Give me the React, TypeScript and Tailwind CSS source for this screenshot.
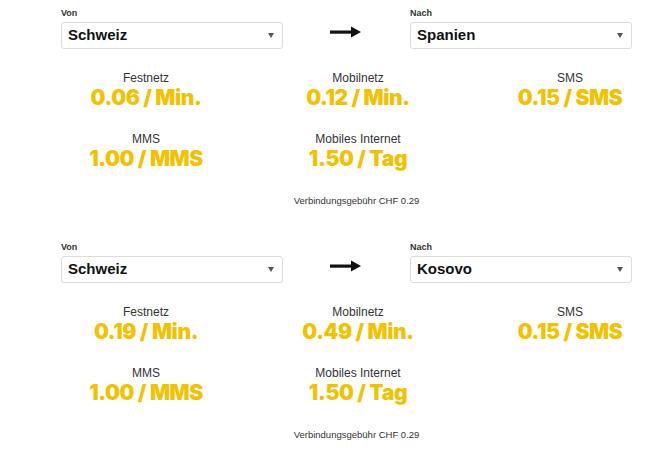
import { ReactNode } from 'react'

type Rate = { label: string; value: string }

const blocks: { to: string; rates: Rate[] }[] = [
  {
    to: 'Spanien',
    rates: [
      { label: 'Festnetz', value: '0.06 / Min.' },
      { label: 'Mobilnetz', value: '0.12 / Min.' },
      { label: 'SMS', value: '0.15 / SMS' },
      { label: 'MMS', value: '1.00 / MMS' },
      { label: 'Mobiles Internet', value: '1.50 / Tag' },
    ],
  },
  {
    to: 'Kosovo',
    rates: [
      { label: 'Festnetz', value: '0.19 / Min.' },
      { label: 'Mobilnetz', value: '0.49 / Min.' },
      { label: 'SMS', value: '0.15 / SMS' },
      { label: 'MMS', value: '1.00 / MMS' },
      { label: 'Mobiles Internet', value: '1.50 / Tag' },
    ],
  },
]

function Field({ label, value }: { label: string; value: string }) {
  return (
    <div className="w-[222px]">
      <div className="h-[14px] text-[9px] font-bold leading-[10px] text-[#333]">{label}</div>
      <div className="flex h-[27px] items-center justify-between rounded-[3px] border border-[#dcdcdc] bg-white pl-[6px] pr-[8px]">
        <span className="text-[15px] font-bold text-[#111]">{value}</span>
        <svg width="6" height="5" viewBox="0 0 6 5">
          <path d="M0 0h6L3 5z" fill="#555" />
        </svg>
      </div>
    </div>
  )
}

function Arrow() {
  return (
    <svg width="31" height="12" viewBox="0 0 31 12" className="mt-[18px]">
      <rect x="0" y="4.5" width="23" height="3.2" fill="#111" />
      <path d="M21 0.5L31 6L21 11.5z" fill="#111" />
    </svg>
  )
}

function Cell({ rate }: { rate: Rate }): ReactNode {
  return (
    <div className="flex flex-col items-center">
      <div className="text-[12px] leading-[14px] text-[#333]">{rate.label}</div>
      <div className="font-['Inter',sans-serif] text-[21px] font-black leading-[26px] tracking-[-0.4px] text-[#f2c200]">
        {rate.value}
      </div>
    </div>
  )
}

function Block({ to, rates }: { to: string; rates: Rate[] }) {
  return (
    <div className="h-[234px] pt-[8px]">
      <div className="flex pl-[61px]">
        <Field label="Von" value="Schweiz" />
        <div className="ml-[47px] w-[80px]">
          <Arrow />
        </div>
        <Field label="Nach" value={to} />
      </div>
      <div className="mt-[22px] grid w-[676px] grid-cols-3 gap-y-[21px] pl-[40px]">
        {rates.map((rate) => (
          <Cell key={rate.label} rate={rate} />
        ))}
      </div>
      <div className="mt-[22px] w-[673px] pl-[40px] text-center text-[9.5px] text-[#333]">
        Verbindungsgebühr CHF 0.29
      </div>
    </div>
  )
}

export default function App() {
  return (
    <div className="h-[453px] w-[671px] overflow-hidden bg-white font-['Liberation_Sans',Arial,sans-serif]">
      {blocks.map((block) => (
        <Block key={block.to} to={block.to} rates={block.rates} />
      ))}
    </div>
  )
}
